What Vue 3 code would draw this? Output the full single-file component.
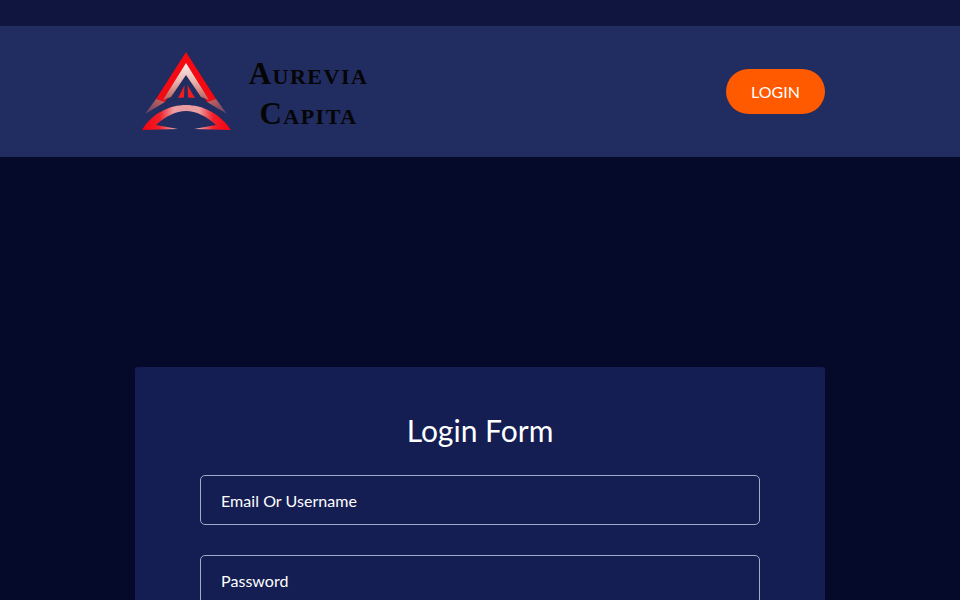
<script setup>
const brandLines = ['Aurevia', 'Capita']
</script>

<template>
  <div class="page">
    <div class="topbar"></div>
    <header class="header">
      <div class="container header-row">
        <div class="brand">
          <svg class="logo" viewBox="135 47 100 90" width="100" height="90" aria-hidden="true">
            <defs>
              <linearGradient id="inner" x1="0" y1="0" x2="0" y2="1">
                <stop offset="0" stop-color="#fdf0ee" />
                <stop offset="0.5" stop-color="#e8b4b0" />
                <stop offset="1" stop-color="#b85f58" />
              </linearGradient>
              <linearGradient id="tailL" x1="1" y1="0" x2="0" y2="1">
                <stop offset="0" stop-color="#d4655c" />
                <stop offset="1" stop-color="#5a4068" />
              </linearGradient>
              <linearGradient id="tailR" x1="0" y1="0" x2="1" y2="1">
                <stop offset="0" stop-color="#d4655c" />
                <stop offset="1" stop-color="#5a4068" />
              </linearGradient>
              <linearGradient id="arc" x1="0" y1="0" x2="1" y2="0">
                <stop offset="0" stop-color="#f5000c" />
                <stop offset="0.2" stop-color="#f0202a" />
                <stop offset="0.36" stop-color="#eda0a4" />
                <stop offset="0.5" stop-color="#e89a9e" />
                <stop offset="0.64" stop-color="#eda0a4" />
                <stop offset="0.8" stop-color="#f0202a" />
                <stop offset="1" stop-color="#f5000c" />
              </linearGradient>
            </defs>
            <g class="logo-art">
              <path d="M186 52 L216 99 L207 102 L186 68 L165 102 L156 99 Z" fill="#f40a12" />
              <path d="M186 63 L209 100 L201 97 L186 75 L171 97 L163 100 Z" fill="url(#inner)" />
              <path d="M156 99 L165 102 L145 114 Z" fill="url(#tailL)" />
              <path d="M216 99 L207 102 L227 114 Z" fill="url(#tailR)" />
              <path d="M184.5 85 L184 97.5 L178 98 Z M187.5 85 L188 97.5 L195 98 Z" fill="#ee1d24" />
              <path d="M142 130 C152 113 170 105 186 105 C202 105 220 113 231 130 L194 129 L216 125 C206 116 196 111 186 111 C176 111 166 116 156 125 L178 129 Z" fill="url(#arc)" />
            </g>
          </svg>
          <div class="wordmark">
            <span v-for="line in brandLines" :key="line" class="word">{{ line }}</span>
          </div>
        </div>
        <button class="login-btn" type="button">LOGIN</button>
      </div>
    </header>
    <main class="main">
      <section class="container card">
        <h1 class="title">Login Form</h1>
        <form class="form">
          <label class="field">Email Or Username</label>
          <label class="field">Password</label>
        </form>
      </section>
    </main>
  </div>
</template>

<style>
html, body { margin: 0; background: #050a2b; }
</style>

<style scoped>
.page {
  height: 600px;
  overflow: hidden;
  background: #050a2b;
  font-family: Lato, "Open Sans", sans-serif;
  color: #fff;
}
.topbar {
  height: 26px;
  background: #10153f;
}
.header {
  height: 131px;
  background: #212c60;
  border-top: 1px solid #252f66;
  box-sizing: border-box;
  display: flex;
  justify-content: center;
}
.container {
  width: 690px;
  box-sizing: border-box;
}
.header-row {
  display: flex;
  align-items: center;
  justify-content: space-between;
}
.brand {
  display: flex;
  align-items: center;
  gap: 11px;
  margin-top: -1px;
}
.logo {
  display: block;
  filter: blur(0.35px);
}
.wordmark {
  display: flex;
  flex-direction: column;
  align-items: center;
  width: 125px;
  margin-top: 4px;
  font-family: "Liberation Serif", serif;
  font-variant: small-caps;
  font-weight: 700;
  font-size: 31px;
  line-height: 40px;
  letter-spacing: 1.5px;
  color: #050505;
}
.word {
  white-space: nowrap;
}
.login-btn {
  width: 99px;
  height: 45px;
  margin-bottom: 2px;
  border: 0;
  border-radius: 23px;
  background: #ff5a00;
  color: #fff;
  font-family: inherit;
  font-size: 16px;
  padding: 0;
}
.main {
  display: flex;
  justify-content: center;
  padding-top: 210px;
}
.card {
  height: 400px;
  padding: 39px 65px 0;
  background: #141e53;
  border-radius: 3px;
}
.title {
  margin: 0 0 21px;
  font-size: 30px;
  font-weight: 400;
  line-height: 48px;
  text-align: center;
  color: #fff;
}
.form {
  display: flex;
  flex-direction: column;
  gap: 30px;
}
.field {
  display: flex;
  align-items: center;
  height: 50px;
  box-sizing: border-box;
  padding: 0 20px;
  border: 1px solid #a3abc8;
  border-radius: 5px;
  font-size: 16px;
  letter-spacing: 0.05px;
  color: #fff;
}
</style>
